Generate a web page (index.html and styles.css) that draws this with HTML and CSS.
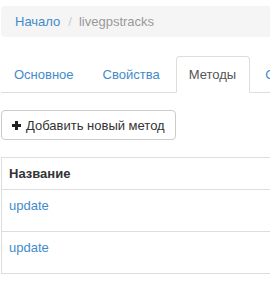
FILE: index.html
```html
<!DOCTYPE html>
<html lang="ru">
<head>
    <meta charset="UTF-8">
    <title>livegpstracks</title>
    <link rel="stylesheet" href="styles.css">
</head>
<body>
    <div class="page">
        <ol class="breadcrumb">
            <li><a href="#">Начало</a></li>
            <li class="active">livegpstracks</li>
        </ol>

        <ul class="nav-tabs">
            <li><a href="#">Основное</a></li>
            <li><a href="#">Свойства</a></li>
            <li class="active"><a href="#">Методы</a></li>
            <li><a href="#">События</a></li>
        </ul>

        <div class="tab-content">
            <button class="btn" type="button">
                <svg class="icon-plus" width="9" height="9" viewBox="0 0 9 9">
                    <path d="M3 0h3v3h3v3H6v3H3V6H0V3h3z" fill="#222"/>
                </svg>
                Добавить новый метод
            </button>

            <table class="table">
                <thead>
                    <tr><th>Название</th></tr>
                </thead>
                <tbody>
                    <tr><td><a href="#">update</a></td></tr>
                    <tr><td><a href="#">update</a></td></tr>
                </tbody>
            </table>
        </div>
    </div>
</body>
</html>
```

FILE: styles.css
```css
body {
    margin: 0;
    font-family: "Liberation Sans", Arial, sans-serif;
    font-size: 13px;
    color: #333;
    background-color: #fff;
    overflow: hidden;
}

a {
    color: #428bca;
    text-decoration: none;
}

.page {
    width: 500px;
    padding: 6px 0 0 1px;
}

.breadcrumb {
    list-style: none;
    margin: 0 0 19px;
    padding: 6px 14px;
    line-height: 19px;
    background-color: #f5f5f5;
    border-radius: 4px;
    display: flex;
}

.breadcrumb li + li::before {
    content: "/";
    color: #ccc;
    padding: 0 7px 0 8px;
}

.breadcrumb .active {
    color: #999;
}

.nav-tabs {
    list-style: none;
    margin: 0;
    padding: 0;
    display: flex;
    border-bottom: 1px solid #ddd;
}

.nav-tabs li {
    margin-right: 2px;
    margin-bottom: -1px;
}

.nav-tabs a {
    display: block;
    padding: 8px 13px 8px 12px;
    line-height: 19px;
    border: 1px solid transparent;
    border-radius: 4px 4px 0 0;
    white-space: nowrap;
}

.nav-tabs .active a {
    color: #555;
    background-color: #fff;
    border-color: #ddd;
    border-bottom-color: transparent;
}

.tab-content {
    padding-top: 17px;
}

.btn {
    display: flex;
    align-items: center;
    gap: 5px;
    height: 30px;
    padding: 0 10px;
    font-family: inherit;
    font-size: 13px;
    color: #333;
    white-space: nowrap;
    background-color: #fff;
    border: 1px solid #ccc;
    border-radius: 4px;
}

.table {
    width: 100%;
    margin-top: 17px;
    border-collapse: collapse;
    border: 1px solid #ddd;
}

.table th,
.table td {
    text-align: left;
    line-height: 19px;
    padding: 6px 7px;
    border-top: 1px solid #ddd;
}

.table th {
    font-weight: bold;
    border-bottom: 1px solid #ddd;
}

.table td {
    padding-bottom: 16px;
}
```
